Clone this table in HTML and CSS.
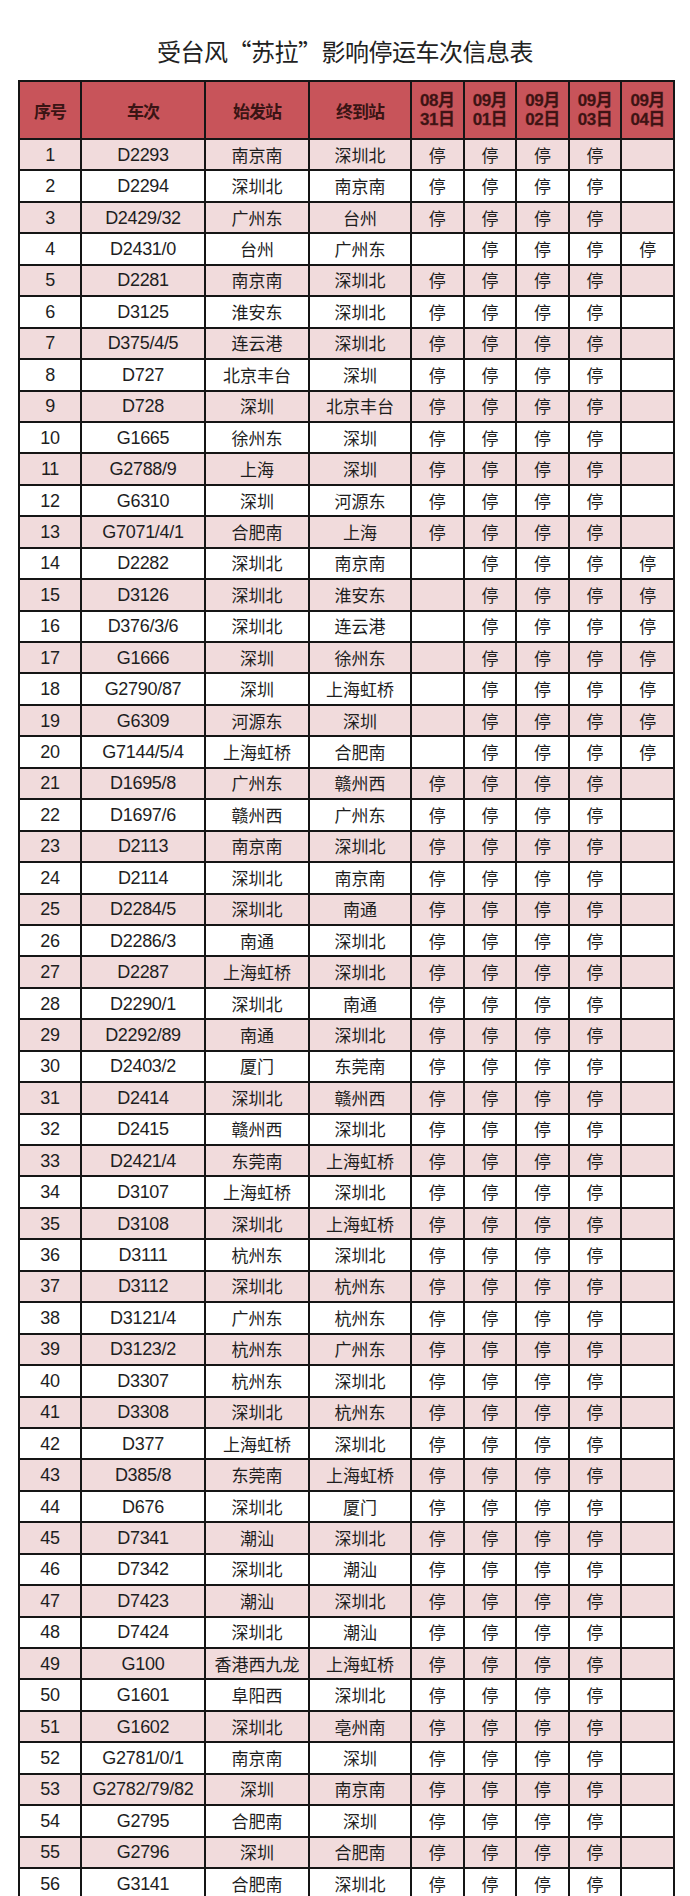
FILE: index.html
```html
<!DOCTYPE html>
<html lang="zh-CN">
<head>
<meta charset="utf-8">
<title>受台风“苏拉”影响停运车次信息表</title>
<link rel="stylesheet" href="styles.css">
</head>
<body>
<div class="page">
<h1 class="title">受台风“苏拉”影响停运车次信息表</h1>
<table class="grid">
<colgroup>
<col class="c-no"><col class="c-train"><col class="c-from"><col class="c-to">
<col class="c-d"><col class="c-d"><col class="c-d"><col class="c-d"><col class="c-d">
</colgroup>
<thead>
<tr>
<th class="h">序号</th><th class="h">车次</th><th class="h">始发站</th><th class="h">终到站</th>
<th class="hd">08月<br>31日</th><th class="hd">09月<br>01日</th><th class="hd">09月<br>02日</th><th class="hd">09月<br>03日</th><th class="hd">09月<br>04日</th>
</tr>
</thead>
<tbody>
<tr class="alt"><td class="n">1</td><td class="n">D2293</td><td>南京南</td><td>深圳北</td><td>停</td><td>停</td><td>停</td><td>停</td><td></td></tr>
<tr><td class="n">2</td><td class="n">D2294</td><td>深圳北</td><td>南京南</td><td>停</td><td>停</td><td>停</td><td>停</td><td></td></tr>
<tr class="alt"><td class="n">3</td><td class="n">D2429/32</td><td>广州东</td><td>台州</td><td>停</td><td>停</td><td>停</td><td>停</td><td></td></tr>
<tr><td class="n">4</td><td class="n">D2431/0</td><td>台州</td><td>广州东</td><td></td><td>停</td><td>停</td><td>停</td><td>停</td></tr>
<tr class="alt"><td class="n">5</td><td class="n">D2281</td><td>南京南</td><td>深圳北</td><td>停</td><td>停</td><td>停</td><td>停</td><td></td></tr>
<tr><td class="n">6</td><td class="n">D3125</td><td>淮安东</td><td>深圳北</td><td>停</td><td>停</td><td>停</td><td>停</td><td></td></tr>
<tr class="alt"><td class="n">7</td><td class="n">D375/4/5</td><td>连云港</td><td>深圳北</td><td>停</td><td>停</td><td>停</td><td>停</td><td></td></tr>
<tr><td class="n">8</td><td class="n">D727</td><td>北京丰台</td><td>深圳</td><td>停</td><td>停</td><td>停</td><td>停</td><td></td></tr>
<tr class="alt"><td class="n">9</td><td class="n">D728</td><td>深圳</td><td>北京丰台</td><td>停</td><td>停</td><td>停</td><td>停</td><td></td></tr>
<tr><td class="n">10</td><td class="n">G1665</td><td>徐州东</td><td>深圳</td><td>停</td><td>停</td><td>停</td><td>停</td><td></td></tr>
<tr class="alt"><td class="n">11</td><td class="n">G2788/9</td><td>上海</td><td>深圳</td><td>停</td><td>停</td><td>停</td><td>停</td><td></td></tr>
<tr><td class="n">12</td><td class="n">G6310</td><td>深圳</td><td>河源东</td><td>停</td><td>停</td><td>停</td><td>停</td><td></td></tr>
<tr class="alt"><td class="n">13</td><td class="n">G7071/4/1</td><td>合肥南</td><td>上海</td><td>停</td><td>停</td><td>停</td><td>停</td><td></td></tr>
<tr><td class="n">14</td><td class="n">D2282</td><td>深圳北</td><td>南京南</td><td></td><td>停</td><td>停</td><td>停</td><td>停</td></tr>
<tr class="alt"><td class="n">15</td><td class="n">D3126</td><td>深圳北</td><td>淮安东</td><td></td><td>停</td><td>停</td><td>停</td><td>停</td></tr>
<tr><td class="n">16</td><td class="n">D376/3/6</td><td>深圳北</td><td>连云港</td><td></td><td>停</td><td>停</td><td>停</td><td>停</td></tr>
<tr class="alt"><td class="n">17</td><td class="n">G1666</td><td>深圳</td><td>徐州东</td><td></td><td>停</td><td>停</td><td>停</td><td>停</td></tr>
<tr><td class="n">18</td><td class="n">G2790/87</td><td>深圳</td><td>上海虹桥</td><td></td><td>停</td><td>停</td><td>停</td><td>停</td></tr>
<tr class="alt"><td class="n">19</td><td class="n">G6309</td><td>河源东</td><td>深圳</td><td></td><td>停</td><td>停</td><td>停</td><td>停</td></tr>
<tr><td class="n">20</td><td class="n">G7144/5/4</td><td>上海虹桥</td><td>合肥南</td><td></td><td>停</td><td>停</td><td>停</td><td>停</td></tr>
<tr class="alt"><td class="n">21</td><td class="n">D1695/8</td><td>广州东</td><td>赣州西</td><td>停</td><td>停</td><td>停</td><td>停</td><td></td></tr>
<tr><td class="n">22</td><td class="n">D1697/6</td><td>赣州西</td><td>广州东</td><td>停</td><td>停</td><td>停</td><td>停</td><td></td></tr>
<tr class="alt"><td class="n">23</td><td class="n">D2113</td><td>南京南</td><td>深圳北</td><td>停</td><td>停</td><td>停</td><td>停</td><td></td></tr>
<tr><td class="n">24</td><td class="n">D2114</td><td>深圳北</td><td>南京南</td><td>停</td><td>停</td><td>停</td><td>停</td><td></td></tr>
<tr class="alt"><td class="n">25</td><td class="n">D2284/5</td><td>深圳北</td><td>南通</td><td>停</td><td>停</td><td>停</td><td>停</td><td></td></tr>
<tr><td class="n">26</td><td class="n">D2286/3</td><td>南通</td><td>深圳北</td><td>停</td><td>停</td><td>停</td><td>停</td><td></td></tr>
<tr class="alt"><td class="n">27</td><td class="n">D2287</td><td>上海虹桥</td><td>深圳北</td><td>停</td><td>停</td><td>停</td><td>停</td><td></td></tr>
<tr><td class="n">28</td><td class="n">D2290/1</td><td>深圳北</td><td>南通</td><td>停</td><td>停</td><td>停</td><td>停</td><td></td></tr>
<tr class="alt"><td class="n">29</td><td class="n">D2292/89</td><td>南通</td><td>深圳北</td><td>停</td><td>停</td><td>停</td><td>停</td><td></td></tr>
<tr><td class="n">30</td><td class="n">D2403/2</td><td>厦门</td><td>东莞南</td><td>停</td><td>停</td><td>停</td><td>停</td><td></td></tr>
<tr class="alt"><td class="n">31</td><td class="n">D2414</td><td>深圳北</td><td>赣州西</td><td>停</td><td>停</td><td>停</td><td>停</td><td></td></tr>
<tr><td class="n">32</td><td class="n">D2415</td><td>赣州西</td><td>深圳北</td><td>停</td><td>停</td><td>停</td><td>停</td><td></td></tr>
<tr class="alt"><td class="n">33</td><td class="n">D2421/4</td><td>东莞南</td><td>上海虹桥</td><td>停</td><td>停</td><td>停</td><td>停</td><td></td></tr>
<tr><td class="n">34</td><td class="n">D3107</td><td>上海虹桥</td><td>深圳北</td><td>停</td><td>停</td><td>停</td><td>停</td><td></td></tr>
<tr class="alt"><td class="n">35</td><td class="n">D3108</td><td>深圳北</td><td>上海虹桥</td><td>停</td><td>停</td><td>停</td><td>停</td><td></td></tr>
<tr><td class="n">36</td><td class="n">D3111</td><td>杭州东</td><td>深圳北</td><td>停</td><td>停</td><td>停</td><td>停</td><td></td></tr>
<tr class="alt"><td class="n">37</td><td class="n">D3112</td><td>深圳北</td><td>杭州东</td><td>停</td><td>停</td><td>停</td><td>停</td><td></td></tr>
<tr><td class="n">38</td><td class="n">D3121/4</td><td>广州东</td><td>杭州东</td><td>停</td><td>停</td><td>停</td><td>停</td><td></td></tr>
<tr class="alt"><td class="n">39</td><td class="n">D3123/2</td><td>杭州东</td><td>广州东</td><td>停</td><td>停</td><td>停</td><td>停</td><td></td></tr>
<tr><td class="n">40</td><td class="n">D3307</td><td>杭州东</td><td>深圳北</td><td>停</td><td>停</td><td>停</td><td>停</td><td></td></tr>
<tr class="alt"><td class="n">41</td><td class="n">D3308</td><td>深圳北</td><td>杭州东</td><td>停</td><td>停</td><td>停</td><td>停</td><td></td></tr>
<tr><td class="n">42</td><td class="n">D377</td><td>上海虹桥</td><td>深圳北</td><td>停</td><td>停</td><td>停</td><td>停</td><td></td></tr>
<tr class="alt"><td class="n">43</td><td class="n">D385/8</td><td>东莞南</td><td>上海虹桥</td><td>停</td><td>停</td><td>停</td><td>停</td><td></td></tr>
<tr><td class="n">44</td><td class="n">D676</td><td>深圳北</td><td>厦门</td><td>停</td><td>停</td><td>停</td><td>停</td><td></td></tr>
<tr class="alt"><td class="n">45</td><td class="n">D7341</td><td>潮汕</td><td>深圳北</td><td>停</td><td>停</td><td>停</td><td>停</td><td></td></tr>
<tr><td class="n">46</td><td class="n">D7342</td><td>深圳北</td><td>潮汕</td><td>停</td><td>停</td><td>停</td><td>停</td><td></td></tr>
<tr class="alt"><td class="n">47</td><td class="n">D7423</td><td>潮汕</td><td>深圳北</td><td>停</td><td>停</td><td>停</td><td>停</td><td></td></tr>
<tr><td class="n">48</td><td class="n">D7424</td><td>深圳北</td><td>潮汕</td><td>停</td><td>停</td><td>停</td><td>停</td><td></td></tr>
<tr class="alt"><td class="n">49</td><td class="n">G100</td><td>香港西九龙</td><td>上海虹桥</td><td>停</td><td>停</td><td>停</td><td>停</td><td></td></tr>
<tr><td class="n">50</td><td class="n">G1601</td><td>阜阳西</td><td>深圳北</td><td>停</td><td>停</td><td>停</td><td>停</td><td></td></tr>
<tr class="alt"><td class="n">51</td><td class="n">G1602</td><td>深圳北</td><td>亳州南</td><td>停</td><td>停</td><td>停</td><td>停</td><td></td></tr>
<tr><td class="n">52</td><td class="n">G2781/0/1</td><td>南京南</td><td>深圳</td><td>停</td><td>停</td><td>停</td><td>停</td><td></td></tr>
<tr class="alt"><td class="n">53</td><td class="n">G2782/79/82</td><td>深圳</td><td>南京南</td><td>停</td><td>停</td><td>停</td><td>停</td><td></td></tr>
<tr><td class="n">54</td><td class="n">G2795</td><td>合肥南</td><td>深圳</td><td>停</td><td>停</td><td>停</td><td>停</td><td></td></tr>
<tr class="alt"><td class="n">55</td><td class="n">G2796</td><td>深圳</td><td>合肥南</td><td>停</td><td>停</td><td>停</td><td>停</td><td></td></tr>
<tr><td class="n">56</td><td class="n">G3141</td><td>合肥南</td><td>深圳北</td><td>停</td><td>停</td><td>停</td><td>停</td><td></td></tr>
</tbody>
</table>
</div>
</body>
</html>
```
FILE: styles.css
```css
html, body {
  margin: 0;
  padding: 0;
  background: #ffffff;
}
.page {
  width: 690px;
  padding: 0 0 0 18px;
  box-sizing: border-box;
  font-family: "Noto Sans CJK SC", "Noto Sans", sans-serif;
  color: #1e1e1e;
}
.title {
  margin: 0;
  height: 80px;
  box-sizing: border-box;
  padding-top: 35px;
  padding-right: 18px;
  font-size: 24px;
  line-height: 32px;
  font-weight: 400;
  text-align: center;
  color: #222;
  letter-spacing: -0.5px;
}
.grid {
  border-collapse: collapse;
  table-layout: fixed;
  width: 655px;
}
.c-no { width: 62px; }
.c-train { width: 124px; }
.c-from { width: 104px; }
.c-to { width: 102px; }
.c-d { width: 52.6px; }
.grid th, .grid td {
  border: 2px solid #151515;
  padding: 0;
  text-align: center;
  vertical-align: middle;
  overflow: hidden;
  white-space: nowrap;
}
.grid th {
  background: #c8545a;
  height: 56px;
  color: #3a1414;
  font-weight: 700;
}
.h {
  font-size: 17px;
  letter-spacing: -1px;
}
.hd {
  font-family: "Liberation Sans", "Noto Sans CJK SC", sans-serif;
  font-size: 17px;
  line-height: 19px;
  color: #5a1618;
  font-weight: 400;
  letter-spacing: -0.5px;
  -webkit-text-stroke: 0.3px #5a1618;
}
.grid td {
  height: 31.45px;
  font-size: 17px;
  line-height: 20px;
  color: #1e1e1e;
  box-sizing: border-box;
}
.grid td.n {
  font-family: "Liberation Sans", Arial, sans-serif;
  font-size: 18px;
  letter-spacing: -0.3px;
}
.alt td {
  background: #f1dbdc;
}
```
